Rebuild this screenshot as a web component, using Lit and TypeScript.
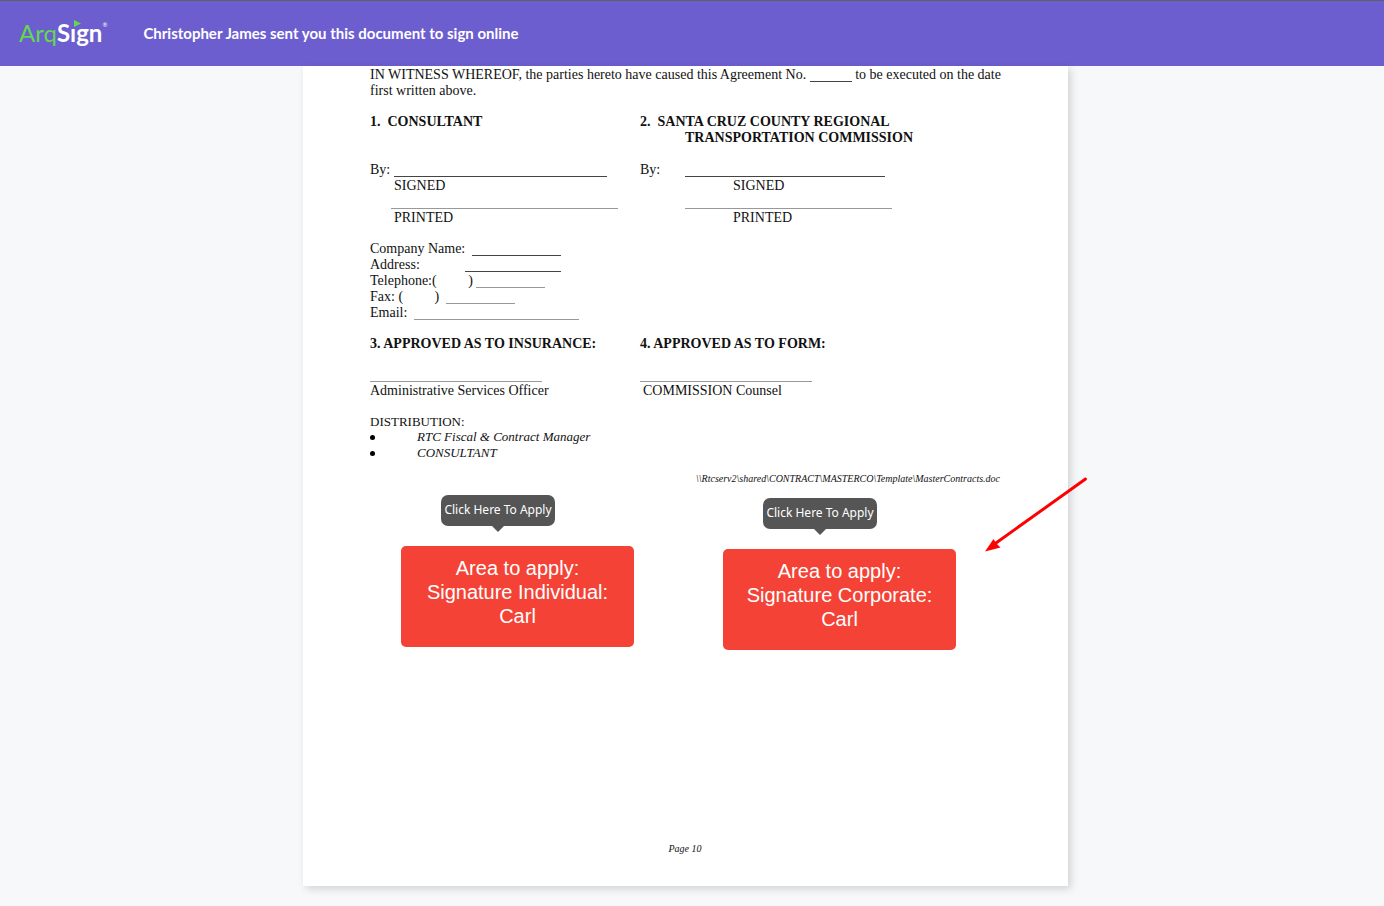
import { LitElement, html, css, svg } from "lit";
import { customElement, property } from "lit/decorators.js";
import { styleMap } from "lit/directives/style-map.js";

const blank = (width: number, soft = false) =>
  html`<span class="blank ${soft ? "soft" : ""}" style=${styleMap({ width: `${width}px` })}></span>`;

@customElement("arq-header")
class ArqHeader extends LitElement {
  static styles = css`
    :host { display: block; }
    .bar {
      box-sizing: border-box;
      height: 66px;
      border-top: 1px solid #5e5e66;
      background: #6c5ecf;
      display: flex;
      align-items: center;
      gap: 36px;
      padding: 0 19px 2px;
      color: #fff;
    }
    .logo {
      position: relative;
      display: flex;
      color: #fff;
      text-decoration: none;
      font: 700 24px/32px Lato, sans-serif;
    }
    .thin { color: #62d84e; font-weight: 400; }
    .flag { position: absolute; left: 54px; top: 3px; width: 8px; height: 7px; }
    .mark { font-size: 6px; line-height: 16px; font-weight: 400; }
    .title { margin: 0; font: 700 15px/24px Lato, sans-serif; }
  `;
  render() {
    return html`<header class="bar">
      <a class="logo" href="#" aria-label="ArqSign">
        <span class="thin">Arq</span><span>Sıgn</span><span class="mark">®</span>
        <svg class="flag" viewBox="0 0 8 7">${svg`<path d="M1 0 8 3.5 1 7Z" fill="#62d84e" />`}</svg>
      </a>
      <h1 class="title">Christopher James sent you this document to sign online</h1>
    </header>`;
  }
}

@customElement("sign-area")
class SignArea extends LitElement {
  @property() kind = "";
  @property() signer = "";
  static styles = css`
    :host { display: flex; flex-direction: column; width: 233px; }
    .tip {
      position: relative;
      align-self: flex-start;
      box-sizing: border-box;
      width: 114px;
      margin: 0 0 20px 40px;
      padding-bottom: 2px;
      border-radius: 7px;
      background: #555;
      color: #fff;
      text-align: center;
      white-space: nowrap;
      font: 12px/29px "Noto Sans", sans-serif;
    }
    .tip::after {
      content: "";
      position: absolute;
      top: 100%;
      left: 51px;
      border: 6px solid transparent;
      border-top-color: #555;
      border-bottom: 0;
    }
    .area {
      box-sizing: border-box;
      height: 101px;
      display: flex;
      justify-content: center;
      align-items: flex-start;
      border: 0;
      border-radius: 5px;
      padding: 10px 16px;
      background: #f44336;
      color: #fff;
      cursor: pointer;
      font: 20px/24px "Liberation Sans", sans-serif;
    }
  `;
  render() {
    return html`
      <div class="tip" role="tooltip">Click Here To Apply</div>
      <button class="area" type="button">
        <span>Area to apply:<br />Signature ${this.kind}:<br />${this.signer}</span>
      </button>
    `;
  }
}

@customElement("app-root")
class AppRoot extends LitElement {
  static styles = css`
    :host {
      display: flex;
      flex-direction: column;
      min-height: 100vh;
      background: #f7f8fa;
    }
    .viewer {
      flex: 1;
      display: flex;
      justify-content: center;
      align-items: flex-start;
      padding: 0 13px 20px 0;
    }
    .page {
      position: relative;
      box-sizing: border-box;
      width: 765px;
      min-height: 820px;
      padding: 1px 60px 29px 67px;
      display: flex;
      flex-direction: column;
      background: #fff;
      box-shadow: 3px 3px 8px rgba(0, 0, 0, 0.15);
      color: #111;
      font: 14px/16px "Liberation Serif", serif;
    }
    p, h2, ul { margin: 0; padding: 0; font-size: inherit; }
    .blank {
      display: inline-block;
      box-sizing: border-box;
      height: 15px;
      vertical-align: top;
      border-bottom: 1px solid #444;
    }
    .soft { border-color: #999; }
    .cols { display: grid; grid-template-columns: 270px 1fr; margin-top: 15px; }
    .row { white-space: pre; height: 16px; }
    .by { display: inline-block; width: 24px; }
    .wide { width: 45px; }
    .in { padding-left: 24px; }
    .in-line { padding-left: 21px; }
    .in-far { padding-left: 93px; }
    .in-mid { padding-left: 45px; }
    .in-one { padding-left: 3px; }
    .signers { margin-top: 16px; }
    .contact { margin-top: 15px; }
    .list-title { margin-top: 15px; font-size: 13px; line-height: 15px; }
    .list { list-style: none; font-style: italic; font-size: 13px; }
    .item { display: flex; gap: 42px; align-items: center; }
    .item::before {
      content: "";
      width: 5px;
      height: 5px;
      border-radius: 50%;
      background: #000;
    }
    .path, .folio { font-style: italic; font-size: 10px; }
    .path { margin: 10px 0 0; padding-right: 8px; text-align: right; }
    .folio { margin-top: auto; text-align: center; padding-right: 8px; }
    .first, .second { position: absolute; left: 98px; top: 429px; }
    .second { left: 420px; top: 432px; }
    .arrow { position: absolute; left: 680px; top: 409px; width: 106px; height: 78px; }
  `;
  render() {
    return html`
      <arq-header></arq-header>
      <main class="viewer">
        <article class="page">
          <p>IN WITNESS WHEREOF, the parties hereto have caused this Agreement No. ${blank(42)} to be executed on the date<br />first written above.</p>
          <div class="cols">
            <h2>1.&nbsp; CONSULTANT</h2>
            <h2>2.&nbsp; SANTA CRUZ COUNTY REGIONAL<div class="in-mid">TRANSPORTATION COMMISSION</div></h2>
          </div>
          <div class="cols signers">
            <div>
              <div class="row"><span class="by">By:</span>${blank(213)}</div>
              <div class="row in">SIGNED</div>
              <div class="row in-line">${blank(227, true)}</div>
              <div class="row in">PRINTED</div>
            </div>
            <div>
              <div class="row"><span class="by wide">By:</span>${blank(200)}</div>
              <div class="row in-far">SIGNED</div>
              <div class="row in-mid">${blank(207, true)}</div>
              <div class="row in-far">PRINTED</div>
            </div>
          </div>
          <div class="contact">
            <div class="row">Company Name:  ${blank(89)}</div>
            <div class="row">Address:             ${blank(96)}</div>
            <div class="row">Telephone:(         ) ${blank(69, true)}</div>
            <div class="row">Fax: (         )  ${blank(69, true)}</div>
            <div class="row">Email:  ${blank(165, true)}</div>
          </div>
          <div class="cols">
            <h2>3. APPROVED AS TO INSURANCE:</h2>
            <h2>4. APPROVED AS TO FORM:</h2>
          </div>
          <div class="cols">
            <div>
              <div class="row">${blank(172, true)}</div>
              <div class="row">Administrative Services Officer</div>
            </div>
            <div>
              <div class="row">${blank(172, true)}</div>
              <div class="row in-one">COMMISSION Counsel</div>
            </div>
          </div>
          <p class="list-title">DISTRIBUTION:</p>
          <ul class="list">
            <li class="item">RTC Fiscal &amp; Contract Manager</li>
            <li class="item">CONSULTANT</li>
          </ul>
          <p class="path">\\\\Rtcserv2\\shared\\CONTRACT\\MASTERCO\\Template\\MasterContracts.doc</p>
          <p class="folio">Page 10</p>
          <sign-area class="first" kind="Individual" signer="Carl"></sign-area>
          <sign-area class="second" kind="Corporate" signer="Carl"></sign-area>
          <svg class="arrow" viewBox="0 0 106 78" aria-hidden="true">
            <path d="M102.500 4 13 68" stroke="#f00" stroke-width="3" stroke-linecap="round" />
            <path d="M2 76.500 10.500 64 13 68 17.500 72.500Z" fill="#f00" />
          </svg>
        </article>
      </main>
    `;
  }
}
